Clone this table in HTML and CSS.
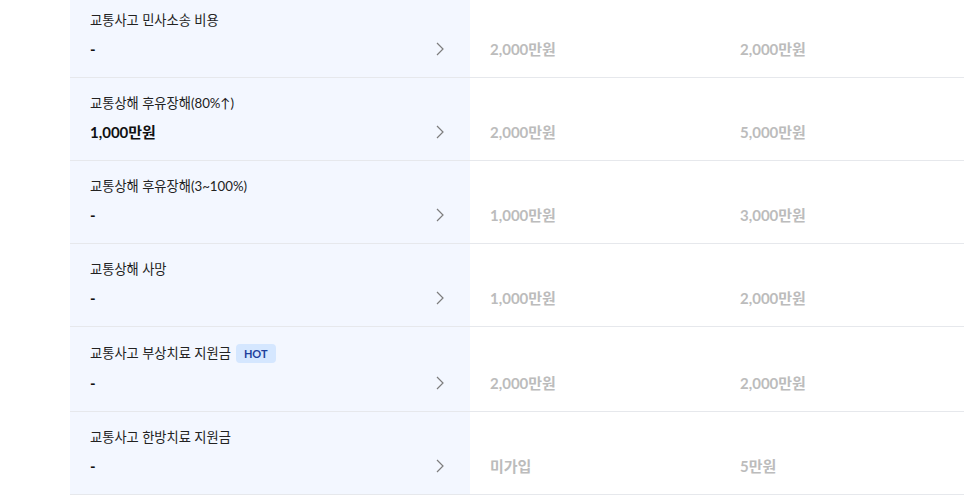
FILE: index.html
```html
<!DOCTYPE html>
<html lang="ko">
<head>
<meta charset="utf-8">
<link rel="stylesheet" href="styles.css">
</head>
<body>
<div class="list">
  <div class="row">
    <div class="main">
      <div class="title">교통사고 민사소송 비용</div>
      <div class="value-line"><span class="value">-</span><svg class="chev" width="8" height="14" viewBox="0 0 8 14"><polyline points="1,1 7,7 1,13" fill="none" stroke="#7d7d7d" stroke-width="1.2"/></svg></div>
    </div>
    <div class="col"><span class="cmp">2,000만원</span></div>
    <div class="col last"><span class="cmp">2,000만원</span></div>
  </div>
  <div class="row">
    <div class="main">
      <div class="title">교통상해 후유장해(80%↑)</div>
      <div class="value-line"><span class="value">1,000만원</span><svg class="chev" width="8" height="14" viewBox="0 0 8 14"><polyline points="1,1 7,7 1,13" fill="none" stroke="#7d7d7d" stroke-width="1.2"/></svg></div>
    </div>
    <div class="col"><span class="cmp">2,000만원</span></div>
    <div class="col last"><span class="cmp">5,000만원</span></div>
  </div>
  <div class="row">
    <div class="main">
      <div class="title">교통상해 후유장해(3~100%)</div>
      <div class="value-line"><span class="value">-</span><svg class="chev" width="8" height="14" viewBox="0 0 8 14"><polyline points="1,1 7,7 1,13" fill="none" stroke="#7d7d7d" stroke-width="1.2"/></svg></div>
    </div>
    <div class="col"><span class="cmp">1,000만원</span></div>
    <div class="col last"><span class="cmp">3,000만원</span></div>
  </div>
  <div class="row">
    <div class="main">
      <div class="title">교통상해 사망</div>
      <div class="value-line"><span class="value">-</span><svg class="chev" width="8" height="14" viewBox="0 0 8 14"><polyline points="1,1 7,7 1,13" fill="none" stroke="#7d7d7d" stroke-width="1.2"/></svg></div>
    </div>
    <div class="col"><span class="cmp">1,000만원</span></div>
    <div class="col last"><span class="cmp">2,000만원</span></div>
  </div>
  <div class="row">
    <div class="main">
      <div class="title has-badge">교통사고 부상치료 지원금<span class="badge">HOT</span></div>
      <div class="value-line"><span class="value">-</span><svg class="chev" width="8" height="14" viewBox="0 0 8 14"><polyline points="1,1 7,7 1,13" fill="none" stroke="#7d7d7d" stroke-width="1.2"/></svg></div>
    </div>
    <div class="col"><span class="cmp">2,000만원</span></div>
    <div class="col last"><span class="cmp">2,000만원</span></div>
  </div>
  <div class="row">
    <div class="main">
      <div class="title">교통사고 한방치료 지원금</div>
      <div class="value-line"><span class="value">-</span><svg class="chev" width="8" height="14" viewBox="0 0 8 14"><polyline points="1,1 7,7 1,13" fill="none" stroke="#7d7d7d" stroke-width="1.2"/></svg></div>
    </div>
    <div class="col"><span class="cmp">미가입</span></div>
    <div class="col last"><span class="cmp">5만원</span></div>
  </div>
</div>
</body>
</html>
```

FILE: styles.css
```css
html, body {
  margin: 0;
  padding: 0;
  background: #ffffff;
  font-family: Lato, "Noto Sans CJK KR", sans-serif;
}

.list {
  margin-top: -5px;
  margin-left: 70px;
}

.row {
  display: flex;
  border-bottom: 1px solid #e6e8ec;
}

.main {
  width: 400px;
  flex-shrink: 0;
  box-sizing: border-box;
  background: #f3f7ff;
  padding: 16px 26px 17px 20px;
  display: flex;
  flex-direction: column;
  gap: 9px;
}

.title {
  font-size: 13.25px;
  line-height: 18px;
  color: #222222;
  display: flex;
  align-items: center;
  gap: 5px;
}

.title.has-badge {
  line-height: 20px;
}

.badge {
  display: inline-block;
  height: 19px;
  line-height: 19px;
  padding: 0 8px;
  border-radius: 4px;
  background: #d5e7ff;
  color: #1f3f9c;
  font-size: 11px;
  font-weight: 700;
}

.value-line {
  display: flex;
  justify-content: space-between;
  align-items: center;
  height: 22px;
}

.value {
  font-size: 15px;
  line-height: 22px;
  font-weight: 700;
  color: #111111;
}

.chev {
  display: block;
}

.col {
  width: 250px;
  flex-shrink: 0;
  box-sizing: border-box;
  padding: 0 20px 17px 20px;
  display: flex;
  align-items: flex-end;
}

.col.last {
  flex: 1 1 auto;
  width: auto;
}

.cmp {
  font-size: 15px;
  line-height: 22px;
  font-weight: 700;
  color: #bcbcbc;
}
```
